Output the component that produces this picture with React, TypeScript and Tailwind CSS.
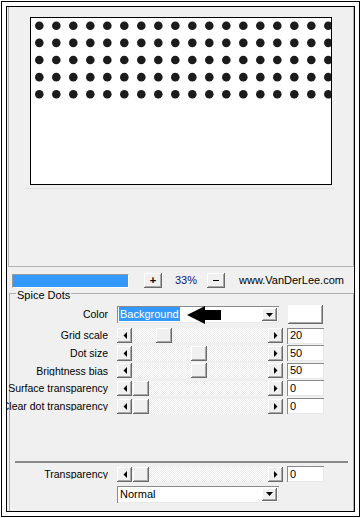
import React from 'react'

const raised =
  'bg-[#f0f0f0] shadow-[inset_-1px_-1px_0_#6b6b6b,inset_1px_1px_0_#ffffff,inset_-2px_-2px_0_#a8a8a8]'
const sunken =
  'bg-white shadow-[inset_1px_1px_0_#8a8a8a,inset_-1px_-1px_0_#e8e8e8]'

function Tri({ dir }: { dir: 'left' | 'right' | 'down' }) {
  if (dir === 'left')
    return (
      <svg width="4" height="7" viewBox="0 0 4 7">
        <polygon points="4,0 4,7 0.5,3.5" fill="#000" />
      </svg>
    )
  if (dir === 'right')
    return (
      <svg width="4" height="7" viewBox="0 0 4 7">
        <polygon points="0,0 0,7 3.5,3.5" fill="#000" />
      </svg>
    )
  return (
    <svg width="7" height="4" viewBox="0 0 7 4">
      <polygon points="0,0 7,0 3.5,4" fill="#000" />
    </svg>
  )
}

function Slider({ thumb }: { thumb: string }) {
  return (
    <div className="flex h-[15px] w-[166px]">
      <div className={`${raised} flex h-[15px] w-[15px] items-center justify-center`}>
        <Tri dir="left" />
      </div>
      <div className="h-[15px] flex-1 bg-[repeating-conic-gradient(#ffffff_0_25%,#e9e9e9_0_50%)] bg-[length:2px_2px]">
        <div className={`${raised} h-[15px] w-[16px] ${thumb}`} />
      </div>
      <div className={`${raised} flex h-[15px] w-[15px] items-center justify-center`}>
        <Tri dir="right" />
      </div>
    </div>
  )
}

function Combo({ children }: { children: React.ReactNode }) {
  return (
    <div className={`${sunken} relative flex h-[17px] w-[162px] items-center p-[2px]`}>
      <div className="flex-1">{children}</div>
      <div className={`${raised} flex h-[13px] w-[15px] items-center justify-center`}>
        <Tri dir="down" />
      </div>
    </div>
  )
}

function Label({ text, shift }: { text: string; shift?: boolean }) {
  return (
    <div
      className={`flex w-[101px] shrink-0 justify-end overflow-hidden whitespace-nowrap text-[10.5px] ${shift ? '-ml-[3px]' : ''}`}
    >
      <span className="shrink-0">{text}</span>
    </div>
  )
}

function Row({ label, thumb, value, shift }: { label: string; thumb: string; value: string; shift?: boolean }) {
  return (
    <div className="flex h-[15px] items-center">
      <Label text={label} shift={shift} />
      <div className="ml-[9px]">
        <Slider thumb={thumb} />
      </div>
      <div className={`${sunken} ml-[4px] flex h-[16px] w-[37px] items-center pl-[3px]`}>{value}</div>
    </div>
  )
}

const rows = [
  { label: 'Grid scale', thumb: 'ml-[24px]', value: '20' },
  { label: 'Dot size', thumb: 'ml-[59px]', value: '50' },
  { label: 'Brightness bias', thumb: 'ml-[59px]', value: '50' },
  { label: 'Surface transparency', thumb: 'ml-[1px]', value: '0' },
  { label: 'Clear dot transparency', thumb: 'ml-[1px]', value: '0' },
]

export default function App() {
  const dots = []
  for (let r = 0; r < 5; r++)
    for (let c = 0; c < 18; c++)
      dots.push(<circle key={`${r}-${c}`} cx={8.3 + 17 * c} cy={7.7 + 17.15 * r} r={4.3} fill="#1c1c1c" />)

  return (
    <div className="h-[518px] w-[362px] bg-white pl-px pt-px font-['Liberation_Sans',Arial,sans-serif] text-[11px] leading-none text-black">
      <div className="h-[516px] w-[359px] border border-black bg-white p-[4px]">
        <div className="flex h-full flex-col border border-black bg-[#f0f0f0]">
          {/* preview */}
          <div className="ml-px h-[260px] shrink-0 border-x border-b border-[#b4b4b4]">
            <div className="ml-[21px] mt-[10px] h-[168px] w-[302px] border border-black bg-white">
              <svg width="300" height="166">
                {dots}
              </svg>
            </div>
            <div className="ml-[16px] mt-[3px] h-px w-[310px] bg-[#e0e0e0]" />
          </div>

          {/* zoom row */}
          <div className="mt-[6px] flex h-[15px] items-center">
            <div className="ml-[5px] h-[14px] w-[117px] border border-[#9a9a9a] border-b-white border-r-white bg-[#3399ff]" />
            <div className={`${raised} ml-[15px] flex h-[15px] w-[18px] items-center justify-center font-bold`}>+</div>
            <div className="w-[45px] pl-[13px] text-[#12127a]">33%</div>
            <div className={`${raised} flex h-[15px] w-[18px] items-center justify-center`}>
              <div className="h-px w-[6px] bg-black" />
            </div>
            <div className="ml-[14px]">www.VanDerLee.com</div>
          </div>

          {/* group */}
          <div className="relative ml-[2px] mt-[5px] w-[345px] flex-1 border-x border-t border-[#b0b0b0] pt-[11px]">
            <div className="absolute left-[6px] top-[-4px] bg-[#f0f0f0] px-px">Spice Dots</div>
            <div className="flex h-[19px] items-center">
              <Label text="Color" shift />
              <div className="ml-[9px]">
                <Combo>
                  <span className="bg-[#3399ff] px-px py-[1px] text-white">Background</span>
                  <svg className="absolute left-[70px] top-0" width="34" height="18" viewBox="0 0 34 18">
                    <polygon points="0,9 18,0 18,4 34,4 34,14 18,14 18,18" fill="#000" />
                  </svg>
                </Combo>
              </div>
              <div className={`${raised} ml-[9px] h-[19px] w-[35px] bg-white`} />
            </div>
            <div className="mt-[4px] flex flex-col gap-[2.67px]">
              {rows.map((r) => (
                <Row key={r.label} {...r} shift />
              ))}
            </div>

            <div className="ml-[5px] mt-[47px] h-[2px] w-[333px] bg-[#8a8a8a]" />

            <div className="mt-[4px]">
              <Row label="Transparency" thumb="ml-[1px]" value="0" shift />
            </div>
            <div className="ml-[107px] mt-[4px]">
              <Combo>
                <span className="pl-px">Normal</span>
              </Combo>
            </div>
          </div>
        </div>
      </div>
    </div>
  )
}
